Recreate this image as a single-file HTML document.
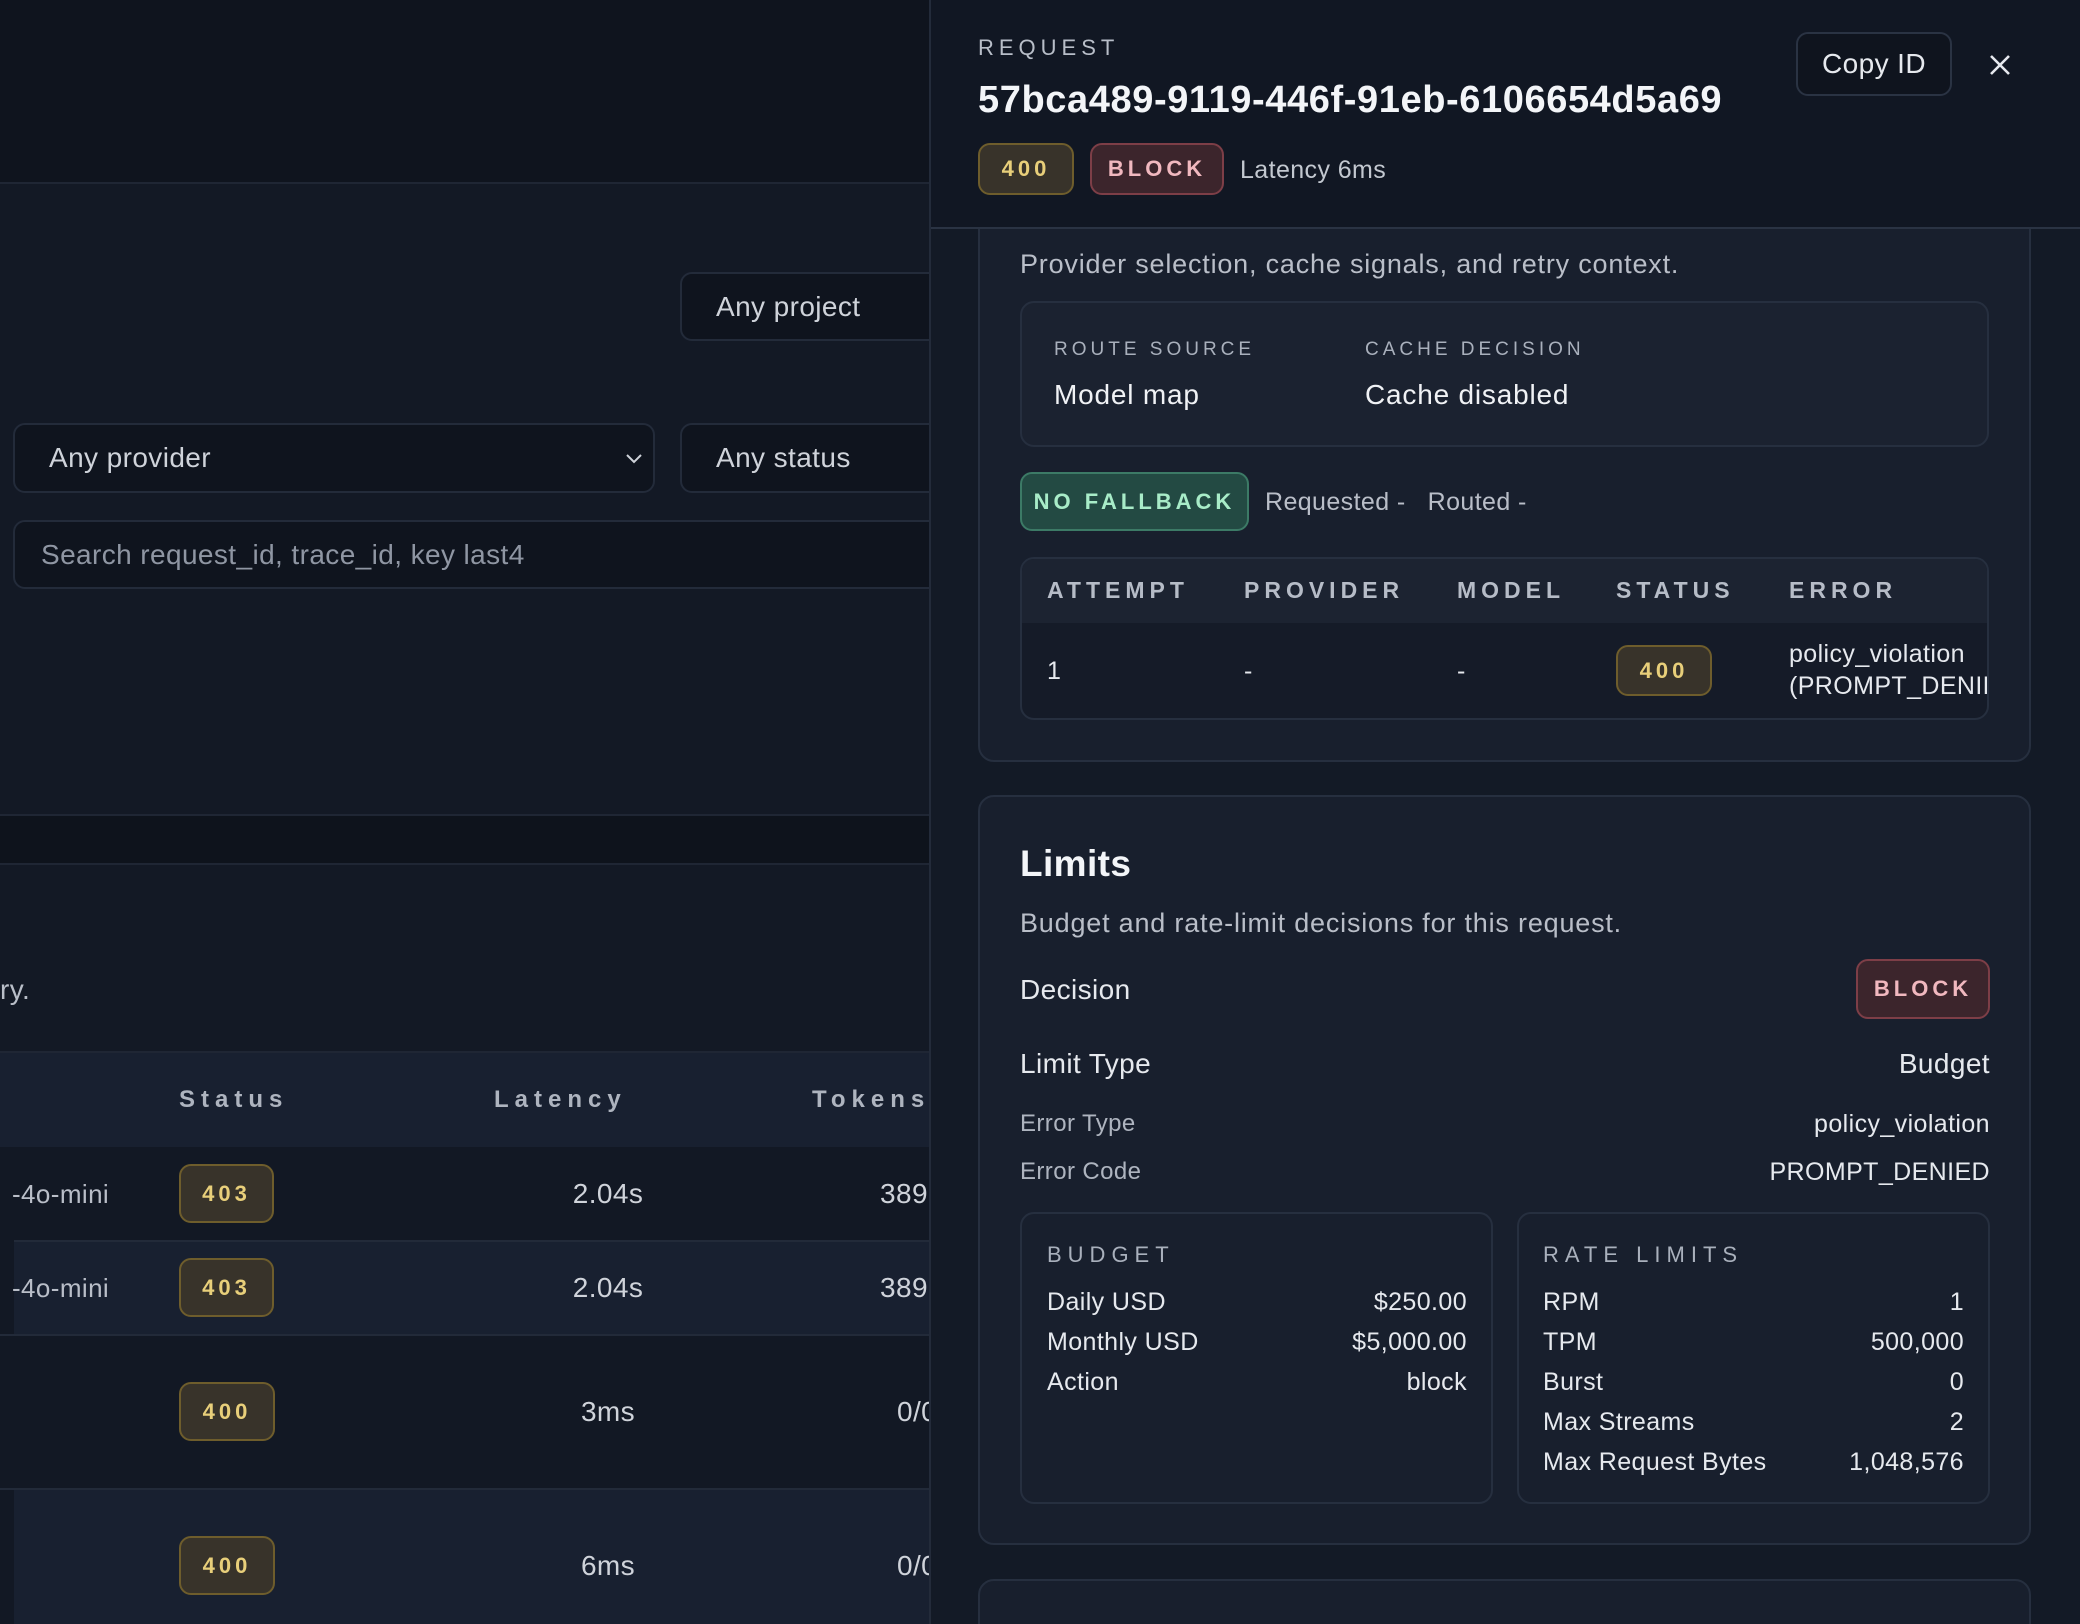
<!DOCTYPE html>
<html style="overflow:hidden;height:1624px"><head><meta charset="utf-8"><style>
*{margin:0;padding:0;box-sizing:border-box}
body{width:2080px;height:1624px;overflow:hidden;background:#131925;font-family:"Liberation Sans",sans-serif;color:#e6e9ee;position:relative;letter-spacing:0.4px}
.a{position:absolute;white-space:nowrap}
.c{position:absolute;display:flex;align-items:center;white-space:nowrap}
.badge{position:absolute;display:flex;align-items:center;justify-content:center;border-radius:12px;font-weight:bold;letter-spacing:4px;font-size:22px}
.y{background:#38332a;border:2px solid #6e5d2c;color:#e8cf7a}
.r{background:#3c252c;border:2px solid #7d3e47;color:#f1b8bf}
.box{position:absolute;border:2px solid #262f3f;border-radius:14px}
.lab{font-size:19px;letter-spacing:4px;color:#a9b0bc}
.th{font-size:23px;font-weight:bold;letter-spacing:5px;color:#b6bcc7}
</style></head><body>
<div class="a" style="left:0;top:0;width:930px;height:184px;background:#0f141e;border-bottom:2px solid #1f2634"></div>
<div class="a" style="left:0;top:814px;width:930px;height:51px;background:#0e131c;border-top:2px solid #1f2634;border-bottom:2px solid #1f2634"></div>
<div class="c" style="left:680px;top:272px;width:300px;height:69px;background:#0f141e;border:2px solid #232b3a;border-radius:12px;padding-left:34px;font-size:28px;color:#cfd3da">Any project</div>
<div class="c" style="left:13px;top:423px;width:642px;height:70px;background:#0f141e;border:2px solid #232b3a;border-radius:12px;padding-left:34px;font-size:28px;color:#cfd3da">Any provider
<svg style="position:absolute;right:10px;top:27px" width="18" height="12" viewBox="0 0 18 12"><path d="M2 3l7 7 7-7" fill="none" stroke="#cfd3da" stroke-width="2"/></svg></div>
<div class="c" style="left:680px;top:423px;width:300px;height:70px;background:#0f141e;border:2px solid #232b3a;border-radius:12px;padding-left:34px;font-size:28px;color:#cfd3da">Any status</div>
<div class="c" style="left:13px;top:520px;width:960px;height:69px;background:#0f141e;border:2px solid #232b3a;border-radius:12px;padding-left:26px;font-size:28px;color:#8f96a3">Search request_id, trace_id, key last4</div>
<div class="c" style="left:0;top:970px;height:40px;font-size:28px;color:#b9bec8">ry.</div>
<div class="a" style="left:0;top:1051px;width:930px;height:96px;background:#182030;border-top:2px solid #1f2634"></div>
<div class="c" style="left:179px;top:1080px;height:40px;font-size:24px;font-weight:bold;letter-spacing:6px;color:#aeb4bf">Status</div>
<div class="c" style="left:494px;top:1080px;height:40px;font-size:24px;font-weight:bold;letter-spacing:6px;color:#aeb4bf">Latency</div>
<div class="c" style="left:812px;top:1080px;height:40px;font-size:24px;font-weight:bold;letter-spacing:6px;color:#aeb4bf">Tokens</div>
<div class="a" style="left:0;top:1147px;width:930px;height:93px;background:#121824"></div>
<div class="a" style="left:14px;top:1240px;width:916px;height:94px;background:#182030;border-top:2px solid #222a39"></div>
<div class="a" style="left:0;top:1240px;width:14px;height:94px;background:#121824"></div>
<div class="a" style="left:0;top:1334px;width:930px;height:154px;background:#121824;border-top:2px solid #222a39"></div>
<div class="a" style="left:0;top:1488px;width:930px;height:136px;background:#121824;border-top:2px solid #222a39"></div>
<div class="a" style="left:14px;top:1490px;width:916px;height:134px;background:#182030"></div>
<div class="c" style="left:12px;top:1176px;height:36px;font-size:26px;color:#b9bec8">-4o-mini</div>
<div class="c" style="left:12px;top:1270px;height:36px;font-size:26px;color:#b9bec8">-4o-mini</div>
<div class="badge y" style="left:179px;top:1164px;width:95px;height:59px">403</div>
<div class="badge y" style="left:179px;top:1258px;width:95px;height:59px">403</div>
<div class="badge y" style="left:179px;top:1382px;width:96px;height:59px">400</div>
<div class="badge y" style="left:179px;top:1536px;width:96px;height:59px">400</div>
<div class="c" style="left:508px;top:1176px;width:200px;height:36px;justify-content:center;font-size:28px;color:#cfd3da">2.04s</div>
<div class="c" style="left:508px;top:1270px;width:200px;height:36px;justify-content:center;font-size:28px;color:#cfd3da">2.04s</div>
<div class="c" style="left:508px;top:1394px;width:200px;height:36px;justify-content:center;font-size:28px;color:#cfd3da">3ms</div>
<div class="c" style="left:508px;top:1548px;width:200px;height:36px;justify-content:center;font-size:28px;color:#cfd3da">6ms</div>
<div class="c" style="left:880px;top:1176px;height:36px;font-size:28px;color:#cfd3da">389</div>
<div class="c" style="left:880px;top:1270px;height:36px;font-size:28px;color:#cfd3da">389</div>
<div class="c" style="left:897px;top:1394px;height:36px;font-size:28px;color:#cfd3da">0/0</div>
<div class="c" style="left:897px;top:1548px;height:36px;font-size:28px;color:#cfd3da">0/0</div>

<div class="a" style="left:929px;top:0;width:1151px;height:1624px;background:#131a26;border-left:2px solid #232b3a;overflow:hidden">
 <div class="box" style="left:47px;top:150px;width:1053px;height:612px;background:#181f2d;border-radius:16px"></div>
 <div class="box" style="left:47px;top:795px;width:1053px;height:750px;background:#181f2d;border-radius:16px"></div>
 <div class="box" style="left:47px;top:1579px;width:1053px;height:100px;background:#181f2d;border-radius:16px"></div>
</div>
<div class="a" style="left:931px;top:0;width:1149px;height:229px;background:#111723;border-bottom:2px solid #2a3343"></div>

<div class="c lab" style="left:978px;top:36px;height:24px;font-size:22px;letter-spacing:5px;color:#b8bec8">REQUEST</div>
<div class="c" style="left:978px;top:78px;height:44px;font-size:38px;font-weight:bold;letter-spacing:0.6px;color:#f3f5f8">57bca489-9119-446f-91eb-6106654d5a69</div>
<div class="badge y" style="left:978px;top:143px;width:96px;height:52px">400</div>
<div class="badge r" style="left:1090px;top:143px;width:134px;height:52px">BLOCK</div>
<div class="c" style="left:1240px;top:155px;height:30px;font-size:25px;color:#c3c8d0">Latency 6ms</div>
<div class="c" style="left:1796px;top:32px;width:156px;height:64px;justify-content:center;border:2px solid #2a3343;border-radius:12px;font-size:28px;background:#0f141e">Copy ID</div>
<svg class="a" style="left:1989px;top:54px" width="22" height="22" viewBox="0 0 22 22"><path d="M2 2l18 18M20 2L2 20" stroke="#e6e9ee" stroke-width="2.6"/></svg>

<div class="c" style="left:1020px;top:246px;height:36px;font-size:27px;letter-spacing:0.8px;color:#b9bec8">Provider selection, cache signals, and retry context.</div>
<div class="box" style="left:1020px;top:301px;width:969px;height:146px;background:#1b2230"></div>
<div class="c lab" style="left:1054px;top:338px;height:24px">ROUTE SOURCE</div>
<div class="c lab" style="left:1365px;top:338px;height:24px">CACHE DECISION</div>
<div class="c" style="left:1054px;top:377px;height:36px;font-size:28px;letter-spacing:0.8px;color:#f0f2f5">Model map</div>
<div class="c" style="left:1365px;top:377px;height:36px;font-size:28px;letter-spacing:0.8px;color:#f0f2f5">Cache disabled</div>
<div class="badge" style="left:1020px;top:472px;width:229px;height:59px;background:#234a43;border:2px solid #3c7a66;color:#a8ecc8">NO FALLBACK</div>
<div class="c" style="left:1265px;top:486px;height:32px;font-size:25px;color:#b9bec8">Requested -&nbsp;&nbsp;&nbsp;Routed -</div>
<div class="box" style="left:1020px;top:557px;width:969px;height:163px;overflow:hidden;background:#151b28">
 <div class="a" style="left:0;top:0;width:100%;height:64px;background:#1c2331"></div>
</div>
<div class="c th" style="left:1047px;top:574px;height:32px">ATTEMPT</div>
<div class="c th" style="left:1244px;top:574px;height:32px">PROVIDER</div>
<div class="c th" style="left:1457px;top:574px;height:32px">MODEL</div>
<div class="c th" style="left:1616px;top:574px;height:32px">STATUS</div>
<div class="c th" style="left:1789px;top:574px;height:32px">ERROR</div>
<div class="c" style="left:1047px;top:655px;height:32px;font-size:25px">1</div>
<div class="c" style="left:1244px;top:655px;height:32px;font-size:25px">-</div>
<div class="c" style="left:1457px;top:655px;height:32px;font-size:25px">-</div>
<div class="badge y" style="left:1616px;top:645px;width:96px;height:51px">400</div>
<div class="a" style="left:1789px;top:638px;width:198px;overflow:hidden;font-size:25px;line-height:32px">policy_violation<br>(PROMPT_DENIED)</div>

<div class="c" style="left:1020px;top:842px;height:44px;font-size:37px;font-weight:bold;color:#f3f5f8">Limits</div>
<div class="c" style="left:1020px;top:905px;height:36px;font-size:27px;letter-spacing:0.8px;color:#b9bec8">Budget and rate-limit decisions for this request.</div>
<div class="c" style="left:1020px;top:972px;height:36px;font-size:28px">Decision</div>
<div class="badge r" style="left:1856px;top:959px;width:134px;height:60px">BLOCK</div>
<div class="c" style="left:1020px;top:1046px;height:36px;font-size:28px">Limit Type</div>
<div class="c" style="left:1700px;top:1046px;width:290px;height:36px;justify-content:flex-end;font-size:28px">Budget</div>
<div class="c" style="left:1020px;top:1109px;height:30px;font-size:24px;color:#aeb4bf">Error Type</div>
<div class="c" style="left:1700px;top:1109px;width:290px;height:30px;justify-content:flex-end;font-size:25px">policy_violation</div>
<div class="c" style="left:1020px;top:1157px;height:30px;font-size:24px;color:#aeb4bf">Error Code</div>
<div class="c" style="left:1700px;top:1157px;width:290px;height:30px;justify-content:flex-end;font-size:25px">PROMPT_DENIED</div>

<div class="box" style="left:1020px;top:1212px;width:473px;height:292px"></div>
<div class="box" style="left:1517px;top:1212px;width:473px;height:292px"></div>
<div class="c lab" style="left:1047px;top:1242px;height:26px;font-size:22px;letter-spacing:6px">BUDGET</div>
<div class="c lab" style="left:1543px;top:1242px;height:26px;font-size:22px;letter-spacing:6px">RATE LIMITS</div>
<div class="a" style="left:1047px;top:1282px;width:420px;font-size:25px;line-height:40px">
 <div style="display:flex;justify-content:space-between"><span>Daily USD</span><span>$250.00</span></div>
 <div style="display:flex;justify-content:space-between"><span>Monthly USD</span><span>$5,000.00</span></div>
 <div style="display:flex;justify-content:space-between"><span>Action</span><span>block</span></div>
</div>
<div class="a" style="left:1543px;top:1282px;width:421px;font-size:25px;line-height:40px">
 <div style="display:flex;justify-content:space-between"><span>RPM</span><span>1</span></div>
 <div style="display:flex;justify-content:space-between"><span>TPM</span><span>500,000</span></div>
 <div style="display:flex;justify-content:space-between"><span>Burst</span><span>0</span></div>
 <div style="display:flex;justify-content:space-between"><span>Max Streams</span><span>2</span></div>
 <div style="display:flex;justify-content:space-between"><span>Max Request Bytes</span><span>1,048,576</span></div>
</div>
</body></html>
